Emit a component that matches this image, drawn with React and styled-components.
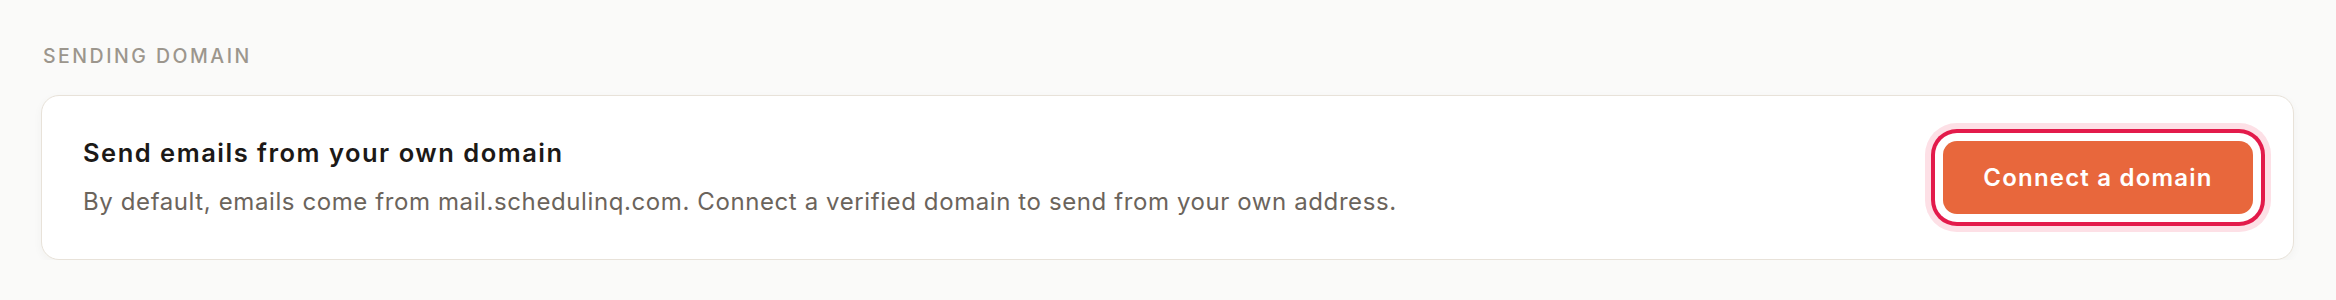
import styled, { createGlobalStyle } from "styled-components";

const GlobalStyle = createGlobalStyle`
  body {
    margin: 0;
    background: #fafaf9;
    font-family: Inter, "Noto Sans", sans-serif;
  }
`;

function App() {
  return (
    <>
      <GlobalStyle />
      <Page>
        <SectionLabel>Sending domain</SectionLabel>
        <Card>
          <CardText>
            <Title>Send emails from your own domain</Title>
            <Description>
              By default, emails come from mail.schedulinq.com. Connect a verified
              domain to send from your own address.
            </Description>
          </CardText>
          <ConnectBtn type="button">Connect a domain</ConnectBtn>
        </Card>
      </Page>
    </>
  );
}

export default App;

const Page = styled.div`
  padding: 42px 42px 0 41px;
`;

const SectionLabel = styled.h2`
  margin: 0 0 25px 2px;
  font-size: 19.5px;
  line-height: 28px;
  font-weight: 500;
  letter-spacing: 2.5px;
  text-transform: uppercase;
  color: #9c968d;
`;

const Card = styled.div`
  box-sizing: border-box;
  height: 165px;
  display: flex;
  align-items: center;
  justify-content: space-between;
  padding: 0 40px 0 41px;
  background: #ffffff;
  border: 1.5px solid #e8e2d9;
  border-radius: 18px;
  box-shadow: 0 3px 10px rgba(60, 40, 20, 0.04);
`;

const CardText = styled.div`
  display: flex;
  flex-direction: column;
  gap: 17px;
`;

const Title = styled.h3`
  margin: 0;
  font-size: 25.5px;
  line-height: 32px;
  font-weight: 600;
  letter-spacing: 1.5px;
  color: #1c1917;
`;

const Description = styled.p`
  margin: 0;
  font-size: 24px;
  line-height: 32px;
  letter-spacing: 0.6px;
  color: #6b645c;
`;

const ConnectBtn = styled.button`
  all: unset;
  cursor: pointer;
  box-sizing: border-box;
  width: 310px;
  height: 73px;
  display: flex;
  align-items: center;
  justify-content: center;
  background: #e8673c;
  color: #ffffff;
  font-family: Inter, "Noto Sans", sans-serif;
  font-size: 24px;
  font-weight: 600;
  letter-spacing: 1.2px;
  border-radius: 14px;
  box-shadow: 0 0 0 8px #ffffff, 0 0 0 12px #e31b4b, 0 0 0 18px #fde0e6;
`;
